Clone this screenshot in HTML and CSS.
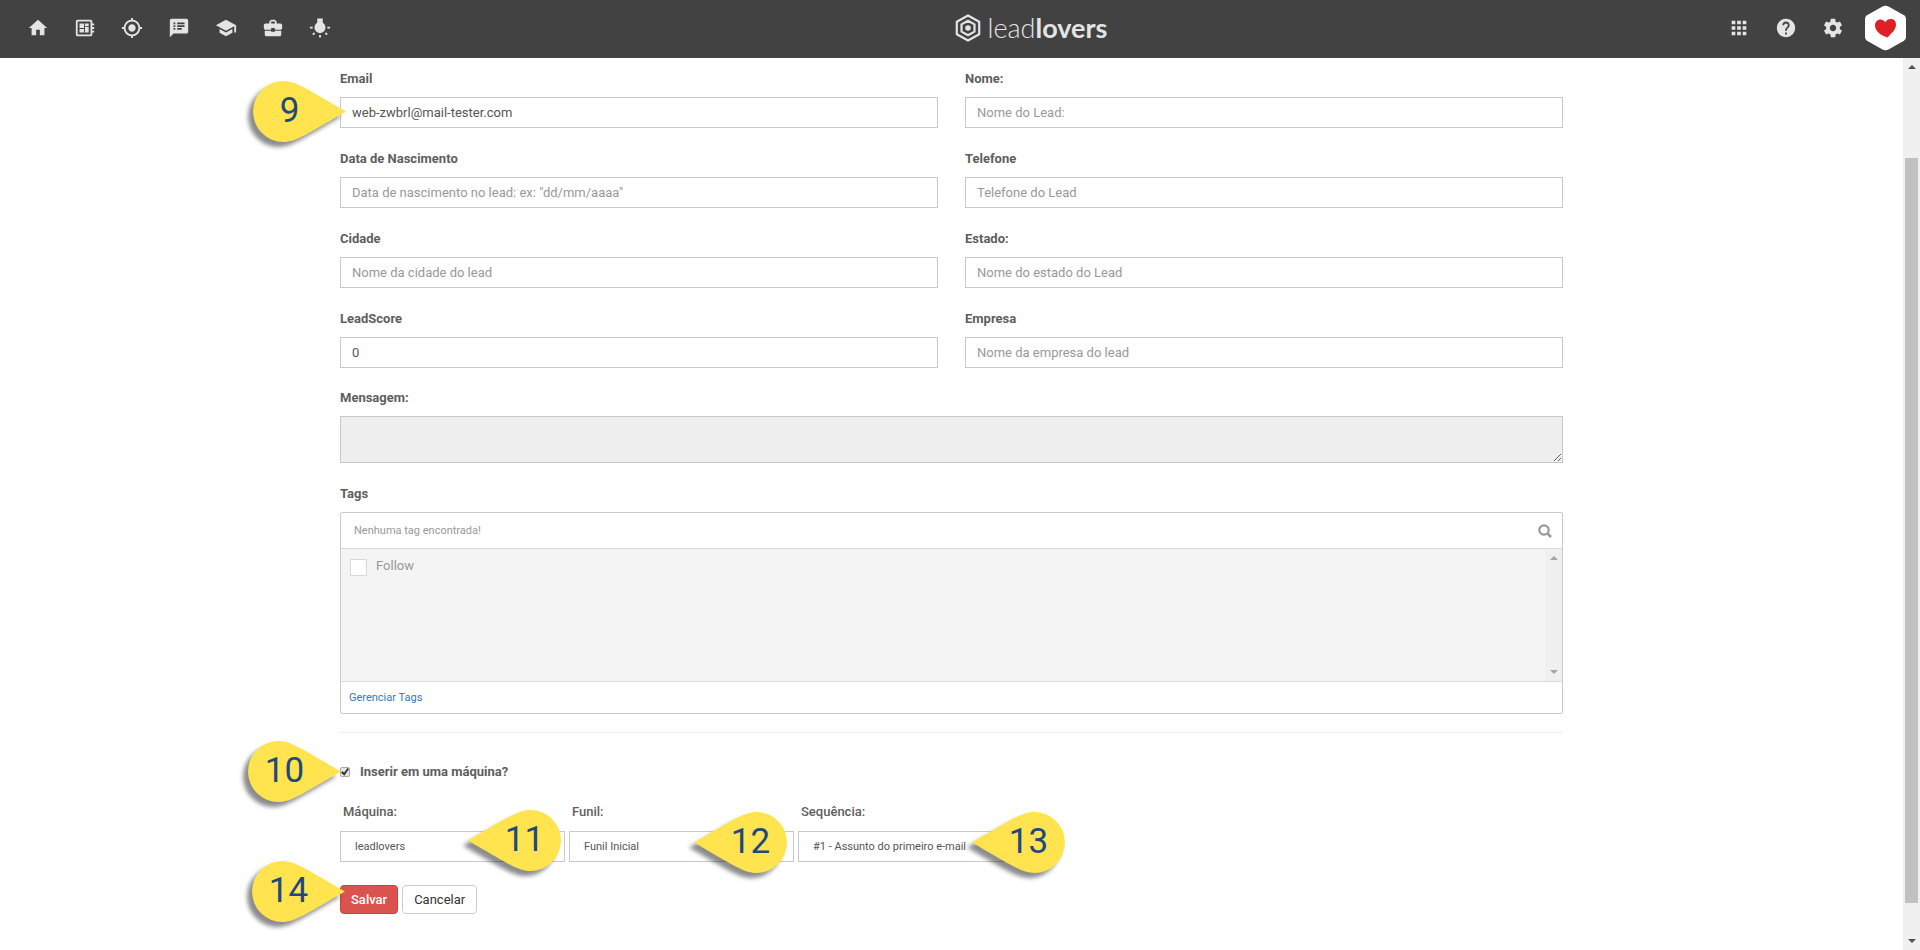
FILE: index.html
```html
<!DOCTYPE html>
<html lang="pt-BR">
<head>
<meta charset="utf-8">
<title>leadlovers</title>
<link rel="stylesheet" href="styles.css">
</head>
<body>
<svg class="defs" aria-hidden="true">
  <symbol id="pin-right" viewBox="0 0 93 61"><path d="M30.500 0C43 0 54 8 93 30.500C54 53 43 61 30.500 61A30.500 30.500 0 0 1 30.500 0Z"/></symbol>
  <symbol id="pin-left" viewBox="0 0 93 61"><path d="M62.500 0C50 0 39 8 0 30.500C39 53 50 61 62.500 61A30.500 30.500 0 0 0 62.500 0Z"/></symbol>
</svg>

<header class="topbar">
  <nav class="nav nav-main">
    <a href="#" aria-label="Início"><svg viewBox="0 0 24 24"><path d="M10 20v-6h4v6h5v-8h3L12 3 2 12h3v8z"/></svg></a>
    <a href="#" aria-label="Painel"><svg viewBox="0 0 24 24"><path d="M22 9V7h-2V5c0-1.100-.9-2-2-2H4c-1.100 0-2 .9-2 2v14c0 1.100.9 2 2 2h14c1.100 0 2-.9 2-2v-2h2v-2h-2v-2h2v-2h-2V9h2zm-4 10H4V5h14v14zM6 13h5v4H6zm6-6h4v3h-4zM6 7h5v5H6zm6 4h4v6h-4z"/></svg></a>
    <a href="#" aria-label="Captura"><svg viewBox="0 0 24 24"><path d="M12 8c-2.210 0-4 1.790-4 4s1.790 4 4 4 4-1.790 4-4-1.790-4-4-4zm8.940 3c-.46-4.170-3.770-7.480-7.940-7.940V1h-2v2.060C6.830 3.520 3.520 6.830 3.060 11H1v2h2.060c.46 4.170 3.770 7.480 7.940 7.940V23h2v-2.060c4.170-.46 7.480-3.770 7.940-7.940H23v-2h-2.060zM12 19c-3.870 0-7-3.130-7-7s3.130-7 7-7 7 3.130 7 7-3.130 7-7 7z"/></svg></a>
    <a href="#" aria-label="Mensagens"><svg viewBox="0 0 24 24"><path d="M20 2H4c-1.100 0-1.990.9-1.990 2L2 22l4-4h14c1.100 0 2-.9 2-2V4c0-1.100-.9-2-2-2zM8 14H6v-2h2v2zm0-3H6V9h2v2zm0-3H6V6h2v2zm7 6h-5v-2h5v2zm3-3h-8V9h8v2zm0-3h-8V6h8v2z"/></svg></a>
    <a href="#" aria-label="Cursos"><svg viewBox="0 0 24 24"><path d="M5 13.180v4L12 21l7-3.820v-4L12 17l-7-3.820zM12 3L1 9l11 6 9-4.910V17h2V9L12 3z"/></svg></a>
    <a href="#" aria-label="Negócios"><svg viewBox="0 0 24 24"><path d="M10 16v-1H3.010L3 19c0 1.110.89 2 2 2h14c1.110 0 2-.89 2-2v-4h-7v1h-4zm10-9h-4.010V5l-2-2h-4l-2 2v2H4c-1.100 0-2 .9-2 2v3c0 1.110.89 2 2 2h6v-2h4v2h6c1.100 0 2-.9 2-2V9c0-1.100-.9-2-2-2zm-6 0h-4V5h4v2z"/></svg></a>
    <a href="#" aria-label="Ideias"><svg viewBox="0 0 24 24"><path d="M3.550 18.540l1.410 1.410 1.800-1.790-1.420-1.410-1.790 1.790zM11 22.450h2V19.500h-2v2.950zM4 10.500H1v2h3v-2zm11-4.190V1.500H9v4.810C7.210 7.350 6 9.280 6 11.500c0 3.310 2.690 6 6 6s6-2.690 6-6c0-2.220-1.210-4.150-3-5.190zm5 4.190v2h3v-2h-3zm-2.760 7.660l1.790 1.800 1.410-1.410-1.800-1.790-1.400 1.400z"/></svg></a>
  </nav>
  <a class="logo" href="#">
    <svg viewBox="0 0 26 28" aria-hidden="true"><g fill="none" stroke="#e4e4e4" stroke-linejoin="round"><path stroke-width="2.200" d="M13 1.500L24.200 7.700V20.300L13 26.500L1.800 20.300V7.700Z"/><path stroke-width="2.200" d="M13 6.800L19.500 10.400V17.600L13 21.200L6.500 17.600V10.400Z"/></g><path fill="#e4e4e4" d="M13 11L15.700 12.500V15.500L13 17L10.300 15.500V12.500Z"/></svg>
    <span class="wordmark">lead<b>lovers</b></span>
  </a>
  <nav class="nav nav-side">
    <a href="#" aria-label="Aplicativos"><svg viewBox="0 0 24 24"><path d="M4 8h4V4H4v4zm6 12h4v-4h-4v4zm-6 0h4v-4H4v4zm0-6h4v-4H4v4zm6 0h4v-4h-4v4zm6-10v4h4V4h-4zm-6 4h4V4h-4v4zm6 6h4v-4h-4v4zm0 6h4v-4h-4v4z"/></svg></a>
    <a href="#" aria-label="Ajuda"><svg viewBox="0 0 24 24"><path d="M12 2C6.480 2 2 6.480 2 12s4.480 10 10 10 10-4.480 10-10S17.520 2 12 2zm1 17h-2v-2h2v2zm2.070-7.750l-.9.920C13.450 12.900 13 13.500 13 15h-2v-.5c0-1.100.45-2.100 1.170-2.830l1.240-1.260c.37-.36.59-.86.59-1.410 0-1.100-.9-2-2-2s-2 .9-2 2H8c0-2.210 1.790-4 4-4s4 1.790 4 4c0 .88-.36 1.680-.93 2.250z"/></svg></a>
    <a href="#" aria-label="Configurações"><svg viewBox="0 0 24 24"><path d="M19.430 12.980c.04-.32.07-.64.07-.98s-.03-.66-.07-.98l2.110-1.650c.19-.15.24-.42.12-.64l-2-3.460c-.12-.22-.39-.3-.61-.22l-2.490 1c-.52-.4-1.080-.73-1.690-.98l-.38-2.650C14.460 2.180 14.250 2 14 2h-4c-.25 0-.46.18-.49.42l-.38 2.650c-.61.25-1.170.59-1.690.98l-2.490-1c-.23-.09-.49 0-.61.22l-2 3.460c-.13.22-.07.49.12.64l2.110 1.650c-.04.32-.07.65-.07.98s.03.66.07.98l-2.110 1.650c-.19.15-.24.42-.12.64l2 3.460c.12.22.39.3.61.22l2.490-1c.52.4 1.080.73 1.690.98l.38 2.650c.03.24.24.42.49.42h4c.25 0 .46-.18.49-.42l.38-2.650c.61-.25 1.170-.59 1.690-.98l2.490 1c.23.09.49 0 .61-.22l2-3.460c.12-.22.07-.49-.12-.64l-2.110-1.650zM12 15.500c-1.930 0-3.500-1.570-3.500-3.500s1.570-3.500 3.500-3.500 3.500 1.570 3.500 3.500-1.570 3.500-3.500 3.500z"/></svg></a>
    <a class="avatar" href="#" aria-label="Conta"><svg viewBox="0 0 41 46"><path fill="#fff" d="M17.500 1.500Q20.500 0 23.500 1.500L39 10.200Q41 11.500 41 14V32Q41 34.500 39 35.800L23.500 44.500Q20.500 46 17.500 44.500L2 35.800Q0 34.500 0 32V14Q0 11.500 2 10.200Z"/><path fill="#e01f26" d="M22.500 32.500C17 31 10 26.500 10 20.500C10 14.500 17 12.500 20.300 17.200C22.500 12.500 31 12.500 31 19.500C31 25 26.500 28 22.500 32.500Z"/></svg></a>
  </nav>
</header>

<div class="viewport">
  <main class="page">
    <form class="form">
      <div class="grid">
        <div class="field">
          <label for="email">Email</label>
          <div class="anchor">
            <input class="control" id="email" type="text" value="web-zwbrl@mail-tester.com">
            <div class="pin pin-r pin-email"><svg><use href="#pin-right"/></svg><span>9</span></div>
          </div>
        </div>
        <div class="field"><label for="nome">Nome:</label><input class="control" id="nome" type="text" placeholder="Nome do Lead:"></div>
        <div class="field"><label for="nasc">Data de Nascimento</label><input class="control" id="nasc" type="text" placeholder="Data de nascimento no lead: ex: &quot;dd/mm/aaaa&quot;"></div>
        <div class="field"><label for="fone">Telefone</label><input class="control" id="fone" type="text" placeholder="Telefone do Lead"></div>
        <div class="field"><label for="cidade">Cidade</label><input class="control" id="cidade" type="text" placeholder="Nome da cidade do lead"></div>
        <div class="field"><label for="estado">Estado:</label><input class="control" id="estado" type="text" placeholder="Nome do estado do Lead"></div>
        <div class="field"><label for="score">LeadScore</label><input class="control" id="score" type="text" value="0"></div>
        <div class="field"><label for="empresa">Empresa</label><input class="control" id="empresa" type="text" placeholder="Nome da empresa do lead"></div>
      </div>

      <div class="field">
        <label for="msg">Mensagem:</label>
        <textarea class="control message" id="msg" readonly></textarea>
      </div>

      <div class="field">
        <label for="tagsearch">Tags</label>
        <div class="tags">
          <div class="tags-search">
            <input id="tagsearch" type="text" placeholder="Nenhuma tag encontrada!">
            <button type="button" aria-label="Buscar"><svg viewBox="0 0 14 14"><circle cx="6" cy="6" r="4.700" fill="none" stroke="#999" stroke-width="2.200"/><path d="M9.200 9.200L13 13" stroke="#999" stroke-width="2.600"/></svg></button>
          </div>
          <div class="tags-list">
            <label class="tag"><input type="checkbox"><span>Follow</span></label>
            <div class="scroll scroll-inner"><i class="arrow up"></i><i class="arrow down"></i></div>
          </div>
          <div class="tags-foot"><a href="#">Gerenciar Tags</a></div>
        </div>
      </div>

      <hr>

      <div class="anchor insert">
        <input type="checkbox" id="inserir" checked>
        <label for="inserir">Inserir em uma máquina?</label>
        <div class="pin pin-r pin-insert"><svg><use href="#pin-right"/></svg><span>10</span></div>
      </div>

      <div class="selects">
        <div class="pick anchor">
          <label for="maquina">Máquina:</label>
          <select id="maquina"><option>leadlovers</option></select>
          <div class="pin pin-l pin-maquina"><svg><use href="#pin-left"/></svg><span>11</span></div>
        </div>
        <div class="pick anchor">
          <label for="funil">Funil:</label>
          <select id="funil"><option>Funil Inicial</option></select>
          <div class="pin pin-l pin-funil"><svg><use href="#pin-left"/></svg><span>12</span></div>
        </div>
        <div class="pick anchor">
          <label for="seq">Sequência:</label>
          <select id="seq"><option>#1 - Assunto do primeiro e-mail</option></select>
          <div class="pin pin-l pin-seq"><svg><use href="#pin-left"/></svg><span>13</span></div>
        </div>
      </div>

      <div class="actions anchor">
        <button class="btn btn-save" type="submit">Salvar</button>
        <button class="btn" type="button">Cancelar</button>
        <div class="pin pin-r pin-save"><svg><use href="#pin-right"/></svg><span>14</span></div>
      </div>
    </form>
  </main>
  <div class="scroll scroll-page"><i class="arrow up"></i><i class="thumb"></i><i class="arrow down"></i></div>
</div>
</body>
</html>
```
FILE: styles.css
```css
* { box-sizing: border-box; }

body {
  margin: 0;
  min-height: 100vh;
  display: flex;
  flex-direction: column;
  background: #fff;
  color: #5e5e5e;
  font: 13px/20px Roboto, "Liberation Sans", sans-serif;
}

input, textarea, select, button { font: inherit; color: inherit; }
a { text-decoration: none; }
.defs { position: absolute; width: 0; height: 0; }

/* Top bar */
.topbar {
  display: grid;
  grid-template-columns: calc(50% - 12px) auto 1fr;
  align-items: center;
  height: 58px;
  padding: 0 14px 2px 27px;
  background: #424242;
}
.nav { display: flex; align-items: center; gap: 25px; }
.nav svg { display: block; width: 22px; height: 22px; fill: #e4e4e4; }
.nav-side { justify-content: flex-end; }
.nav .avatar { margin-left: -4px; }
.nav .avatar svg { width: 41px; height: 46px; }
.logo { display: flex; align-items: center; gap: 7px; color: #e4e4e4; }
.logo svg { width: 26px; height: 28px; }
.wordmark { font: 300 27px/28px Lato, sans-serif; }
.wordmark b { font-weight: 700; }

/* Page */
.viewport { flex: 1; display: flex; }
.page { flex: 1; padding: 11px 40px 0; }
.form { max-width: 1223px; margin: 0 auto; }
.anchor { position: relative; }

.grid { display: grid; grid-template-columns: 1fr 1fr; column-gap: 27px; margin-bottom: -1px; }
.field { display: flex; flex-direction: column; gap: 8px; margin-bottom: 21px; }
.field > label { font-weight: 700; }
.control {
  display: block;
  width: 100%;
  height: 31px;
  padding: 0 11px;
  border: 1px solid #c9c9c9;
  border-radius: 0;
  background: #fff;
  color: #555;
  outline: 0;
}
.control::placeholder, .tags-search input::placeholder { color: #999; opacity: 1; }
.message { height: 47px; background: #eee; resize: vertical; }

/* Tags */
.tags { border: 1px solid #c9c9c9; border-radius: 2px; }
.tags-search { display: flex; align-items: center; height: 35px; padding: 0 10px 0 13px; }
.tags-search input { flex: 1; padding: 0; border: 0; outline: 0; background: none; font-size: 11px; }
.tags-search button { padding: 0; border: 0; background: none; }
.tags-search svg { display: block; width: 14px; height: 14px; }
.tags-list {
  display: flex;
  justify-content: space-between;
  height: 134px;
  border: solid #d9d9d9;
  border-width: 1px 0;
  background: #f4f4f4;
}
.tag { display: flex; align-self: flex-start; align-items: center; gap: 9px; padding: 7px 9px; color: #999; }
.tag input { appearance: none; width: 17px; height: 17px; margin: 2px 0 0; border: 1px solid #d9d9d9; background: #fff; }
.tags-foot { padding: 6px 8px 5px; font-size: 11px; }
.tags-foot a { color: #337ab7; }

hr { height: 1px; margin: -3px 0 29px; border: 0; background: #eee; }

/* Machine options */
.insert { display: flex; align-items: center; gap: 10px; font-weight: 700; }
.insert input {
  appearance: none;
  display: grid;
  place-items: center;
  width: 10px;
  height: 10px;
  margin: 0;
  border: 1px solid #aaa;
  border-radius: 2px;
  background: #e6e6e6;
}
.insert input:checked::before {
  content: "";
  width: 8px;
  height: 8px;
  background: #333;
  clip-path: polygon(0 55%, 18% 38%, 38% 58%, 82% 0, 100% 14%, 42% 96%);
}
.selects { display: flex; gap: 4px; margin: 20px 0 23px; }
.pick { display: flex; flex-direction: column; gap: 9px; width: 225px; }
.pick label { padding-left: 3px; font-weight: 500; }
.pick select {
  appearance: none;
  height: 31px;
  padding: 0 14px;
  border: 1px solid #c9c9c9;
  border-radius: 0;
  background: #fff;
  color: #555;
  font-size: 11px;
}

.actions { display: flex; gap: 4px; margin-bottom: 12px; }
.btn { height: 29px; padding: 0 11px; border: 1px solid #ccc; border-radius: 4px; background: #fff; color: #333; }
.btn-save { padding: 0 10px; border-color: #d43f3a; background: #d9534f; color: #fff; font-weight: 500; }

/* Step markers */
.pin {
  position: absolute;
  display: flex;
  align-items: center;
  width: 93px;
  height: 61px;
  color: #1f497d;
  font: 35px/40px Roboto, "Liberation Sans", sans-serif;
  text-align: center;
  pointer-events: none;
  z-index: 1;
}
.pin svg {
  position: absolute;
  inset: 0;
  width: 93px;
  height: 61px;
  overflow: visible;
  fill: #ffe450;
  filter: drop-shadow(-5px 5px 2px rgba(0, 0, 0, .45));
}
.pin span { position: relative; flex: 1; padding-bottom: 2px; }
.pin-r span { padding-right: 20px; }
.pin-l span { padding-left: 20px; }
.pin-email { left: -87px; top: -16px; }
.pin-insert { left: -92px; top: -21px; }
.pin-maquina { left: 128px; top: 8px; }
.pin-funil { left: 125px; top: 10px; }
.pin-seq { left: 174px; top: 10px; }
.pin-save { left: -88px; top: -24px; }

/* Scroll bars */
.scroll { display: flex; flex-direction: column; align-items: center; background: #f0f0f0; }
.scroll-page { width: 17px; padding: 7px 0; color: #505050; }
.scroll-inner { width: 16px; padding: 7px 0; justify-content: space-between; color: #a3a3a3; }
.arrow { border: 4px solid transparent; border-top-width: 0; border-bottom-width: 0; }
.arrow.up { border-bottom: 4px solid currentColor; }
.arrow.down { border-top: 4px solid currentColor; }
.thumb { flex: 1; width: 13px; margin-top: 89px; margin-bottom: 36px; background: #c1c1c1; }
```
